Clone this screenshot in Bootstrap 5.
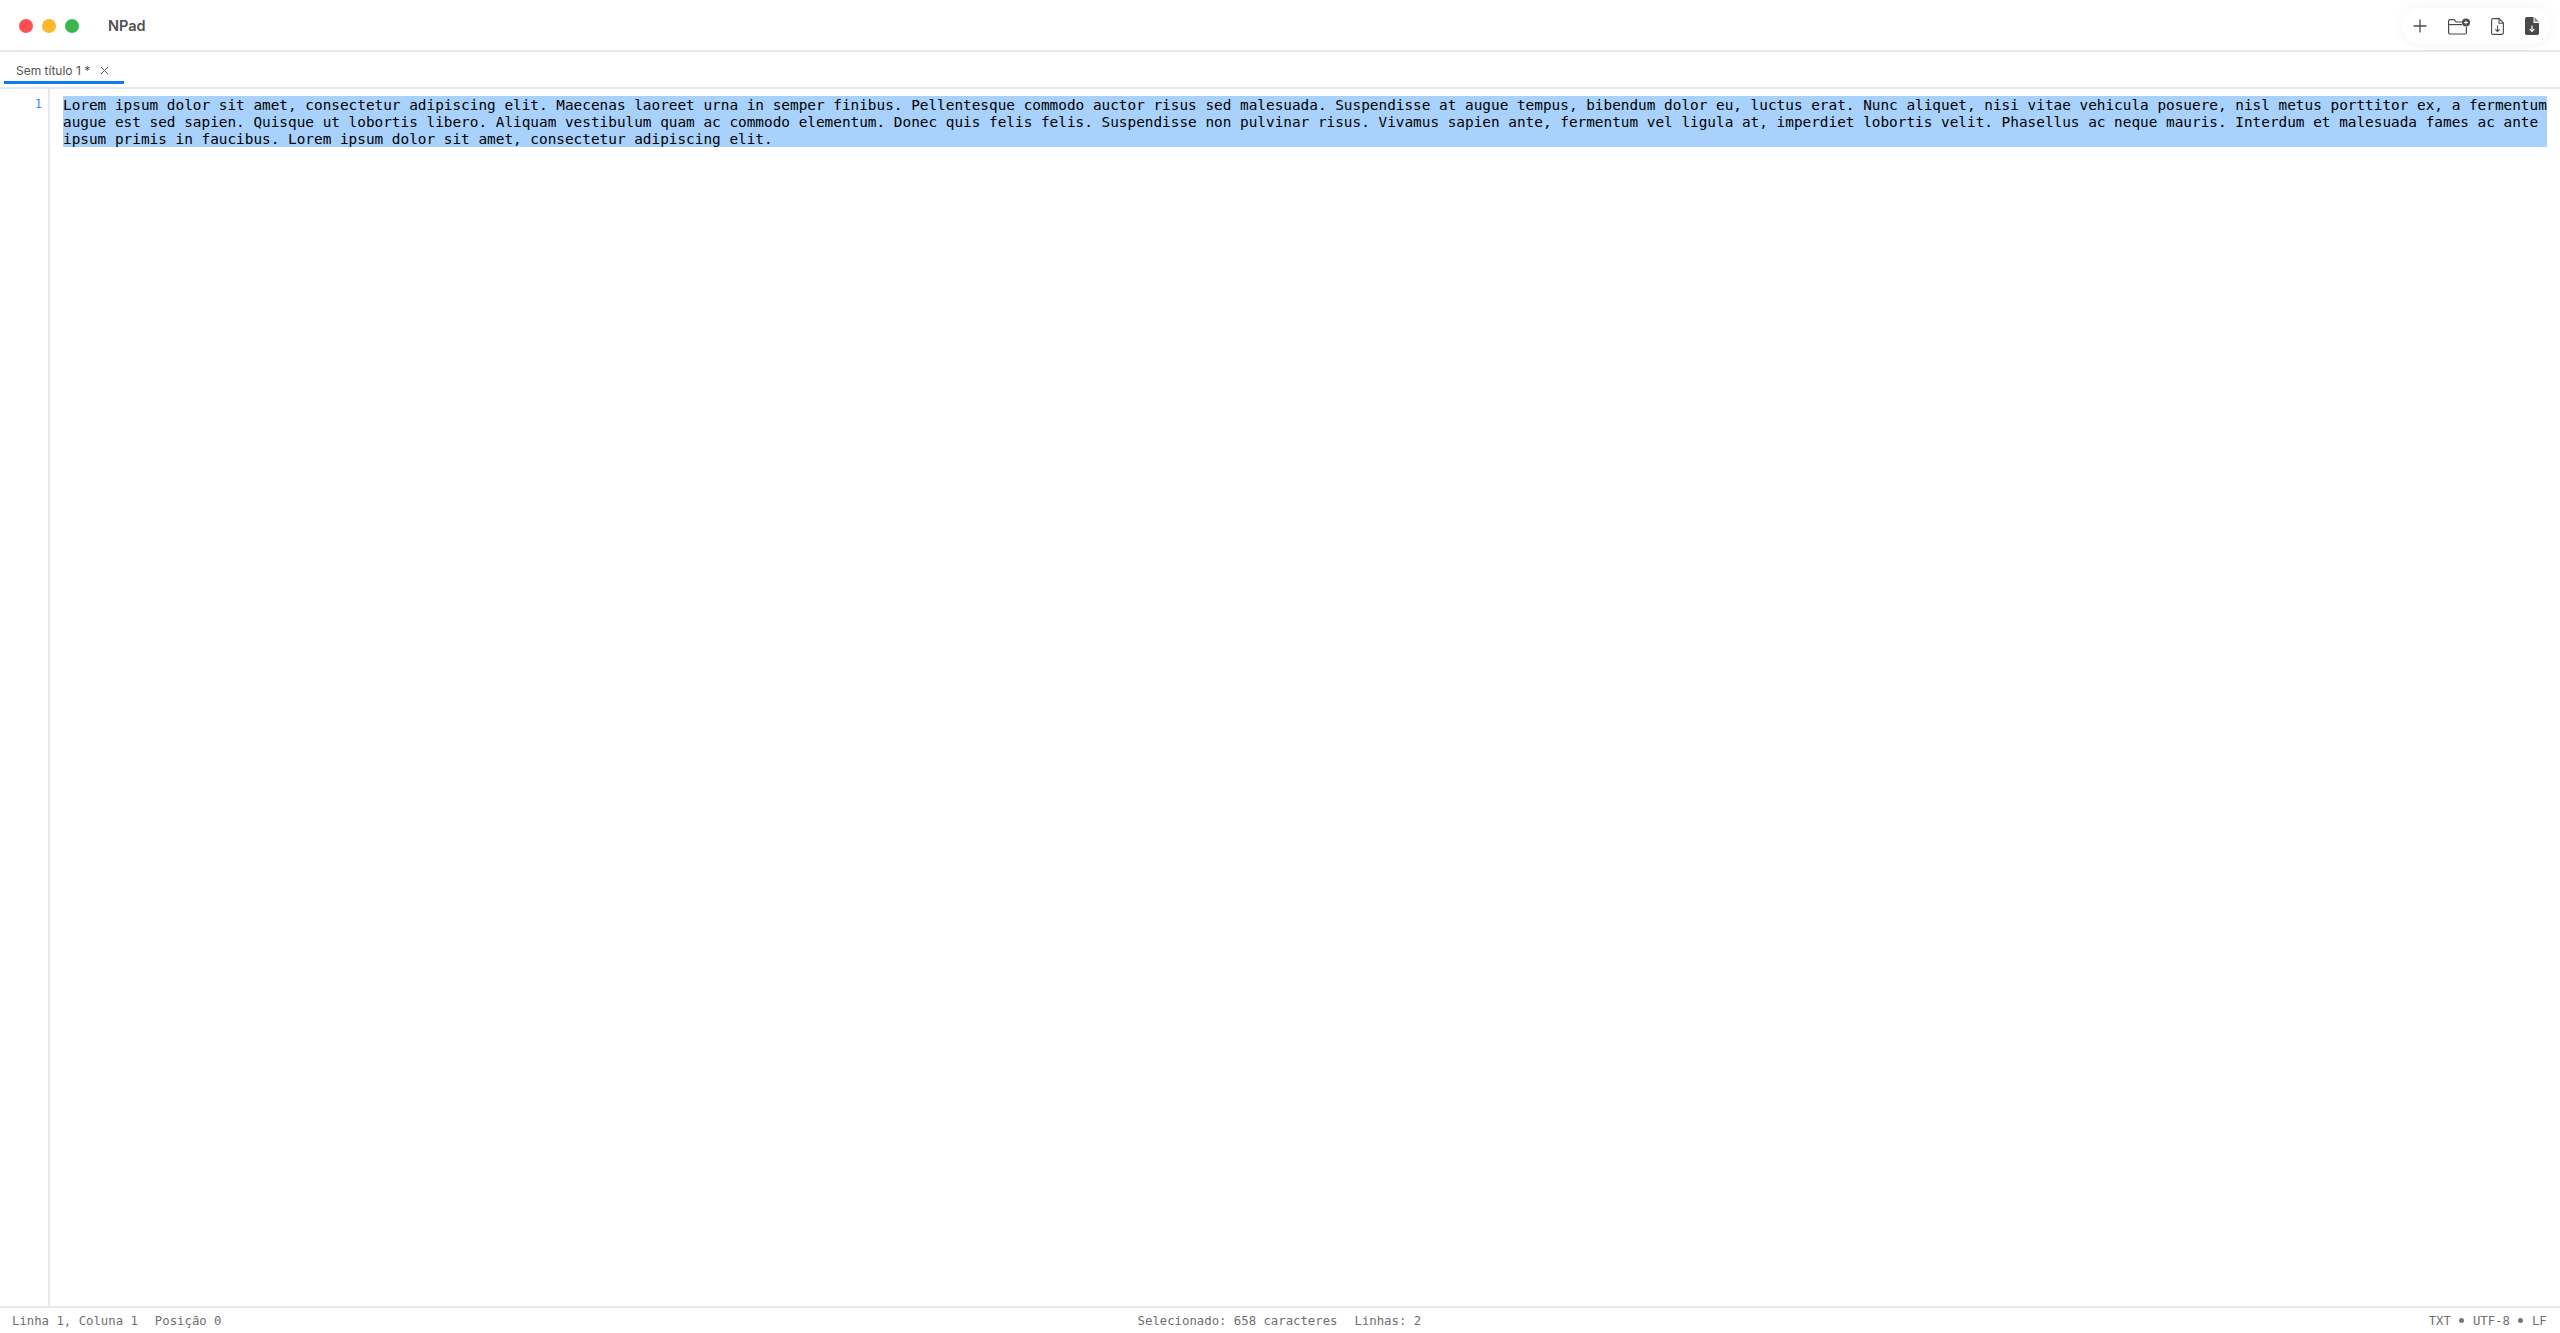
<!DOCTYPE html>
<html lang="pt-BR">
<head>
  <meta charset="UTF-8" />
  <meta name="viewport" content="width=device-width, initial-scale=1.0"/>
  <title>NPad</title>
  <link href="https://cdn.jsdelivr.net/npm/bootstrap@5.3.3/dist/css/bootstrap.min.css" rel="stylesheet" />
  <style>
    html, body { height: 100%; }
    body { font-family: "Inter", "Liberation Sans", sans-serif; background: #fff; overflow: hidden; }
    .app-title { height: 52px; border-bottom: 2px solid #e8e8e8; padding: 2px 10px 0 19px; }
    .light { width: 14px; height: 14px; border-radius: 50%; }
    .light-red { background: #ff4f52; }
    .light-yellow { background: #fdb728; }
    .light-green { background: #3ab54f; }
    .lights { gap: 9px; margin-right: 29px; }
    .app-name { font-size: 14.5px; font-weight: 600; color: #505050; }
    .tool-pill { height: 36px; width: 148px; border-radius: 18px; background: #fff; box-shadow: 0 0 14px rgba(0,0,0,.05); padding: 0 11px; gap: 21px; }
    .tool-pill svg { display: block; }
    .tab-bar { height: 37px; border-bottom: 2px solid #e8e8e8; padding-left: 4px; }
    .file-tab { width: 120px; height: 32px; border-bottom: 3px solid #0d7af0; padding: 8px 0 0 12px; font-size: 12px; color: #555; }
    .file-tab svg { margin-left: 10px; }
    .edit-area { min-height: 0; }
    .gutter { width: 50px; border-right: 2px solid #e8e8e8; padding: 7px 6px 0 0; font: 12px/17px "DejaVu Sans Mono", monospace; color: #2f8cf5; text-align: right; }
    .edit-text { padding: 7px 13px 0 13px; min-width: 0; }
    .sel-block { height: 51px; padding-top: 1px; background: #a8d1fb; color: #000; font: 14.38px/17px "DejaVu Sans Mono", monospace; white-space: pre-wrap; margin: 0; }
    .status-bar { height: 27px; border-top: 2px solid #e8e8e8; padding: 0 13px 0 12px; font: 12.3px "DejaVu Sans Mono", monospace; color: #6f6f6f; }
    .status-part { width: 33.33%; gap: 17px; }
    .dot-sep { display: inline-block; width: 5px; height: 5px; border-radius: 50%; background: #777; margin: 0 8.5px; vertical-align: 2px; }
  </style>
</head>
<body class="d-flex flex-column">
  <div class="app-title d-flex align-items-center flex-shrink-0">
    <div class="lights d-flex">
      <span class="light light-red"></span>
      <span class="light light-yellow"></span>
      <span class="light light-green"></span>
    </div>
    <span class="app-name">NPad</span>
    <div class="tool-pill d-flex align-items-center ms-auto">
      <svg width="14" height="14" viewBox="0 0 14 14" fill="none" stroke="#4a4a4a" stroke-width="1.3"><path d="M7 .5v13M.5 7h13"/></svg>
      <svg width="22" height="17" viewBox="0 0 22 17" fill="none" stroke="#4a4a4a" stroke-width="1.2"><path d="M18.400 9v5.500a1.500 1.500 0 0 1-1.500 1.500H2.100A1.500 1.500 0 0 1 .6 14.500V3.100A1.500 1.500 0 0 1 2.100 1.600h4l2 2.400H14"/><path d="M.6 6.600h13.400"/><circle cx="18" cy="4.500" r="4" fill="#4a4a4a" stroke="none"/><path d="M18 2.500v4M16 4.500h4" stroke="#fff" stroke-width="1"/></svg>
      <svg width="13" height="17" viewBox="0 0 13 17" fill="none" stroke="#4a4a4a" stroke-width="1.100"><path d="M1.900.6h6.300l4.200 4.400v9.900a1.500 1.500 0 0 1-1.500 1.500H1.900a1.500 1.500 0 0 1-1.300-1.500V2.100A1.500 1.500 0 0 1 1.900.6z"/><path d="M8 .6V5.200h4.400"/><path d="M6.500 7.500v6M4.300 11.300l2.200 2.200 2.200-2.200"/></svg>
      <svg width="14" height="18" viewBox="0 0 14 18"><path fill="#4a4a4a" d="M1.800 0h6.700v6H14v10.200a1.800 1.800 0 0 1-1.800 1.800H1.800A1.800 1.800 0 0 1 0 16.200V1.800A1.800 1.800 0 0 1 1.800 0z"/><path fill="#8c8c8c" d="M9.500 0L14 4.800H9.500z"/><path d="M7 8.500v6M4.700 12.200L7 14.500l2.300-2.300" fill="none" stroke="#fff" stroke-width="1.200"/></svg>
    </div>
  </div>

  <div class="tab-bar d-flex flex-shrink-0">
    <div class="file-tab d-flex align-items-center">
      <span>Sem título 1 *</span>
      <svg width="9" height="9" viewBox="0 0 9 9" fill="none" stroke="#555" stroke-width="1"><path d="M1 1l7 7M8 1l-7 7"/></svg>
    </div>
  </div>

  <div class="edit-area d-flex flex-grow-1">
    <div class="gutter flex-shrink-0">1</div>
    <div class="edit-text flex-grow-1">
      <p class="sel-block">Lorem ipsum dolor sit amet, consectetur adipiscing elit. Maecenas laoreet urna in semper finibus. Pellentesque commodo auctor risus sed malesuada. Suspendisse at augue tempus, bibendum dolor eu, luctus erat. Nunc aliquet, nisi vitae vehicula posuere, nisl metus porttitor ex, a fermentum augue est sed sapien. Quisque ut lobortis libero. Aliquam vestibulum quam ac commodo elementum. Donec quis felis felis. Suspendisse non pulvinar risus. Vivamus sapien ante, fermentum vel ligula at, imperdiet lobortis velit. Phasellus ac neque mauris. Interdum et malesuada fames ac ante ipsum primis in faucibus. Lorem ipsum dolor sit amet, consectetur adipiscing elit.</p>
    </div>
  </div>

  <div class="status-bar d-flex align-items-center flex-shrink-0">
    <div class="status-part d-flex"><span>Linha 1, Coluna 1</span><span>Posição 0</span></div>
    <div class="status-part d-flex justify-content-center"><span>Selecionado: 658 caracteres</span><span>Linhas: 2</span></div>
    <div class="status-part d-flex justify-content-end"><span>TXT<i class="dot-sep"></i>UTF-8<i class="dot-sep"></i>LF</span></div>
  </div>
</body>
</html>
